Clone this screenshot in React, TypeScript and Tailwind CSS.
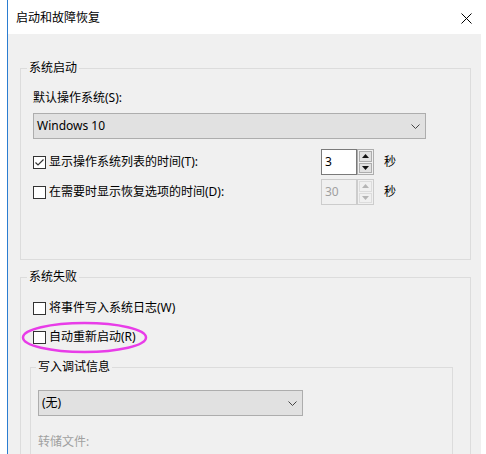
import React from "react";

const font = { fontFamily: '"Noto Sans", "Noto Sans CJK SC", sans-serif' };

function Check({ checked }: { checked?: boolean }) {
  return (
    <div className="w-[13px] h-[13px] border border-[#333333] bg-white flex items-center justify-center shrink-0">
      {checked && (
        <svg width="11" height="11" viewBox="0 0 11 11">
          <polyline points="1.5,5.5 4,8 9.5,2.5" fill="none" stroke="#333" strokeWidth="1.2" />
        </svg>
      )}
    </div>
  );
}

function Chevron() {
  return (
    <svg width="9" height="5" viewBox="0 0 9 5">
      <polyline points="0.5,0.5 4.5,4.5 8.5,0.5" fill="none" stroke="#444" strokeWidth="1" />
    </svg>
  );
}

function Combo({ text, width }: { text: string; width: string }) {
  return (
    <div className={`${width} h-[26px] border border-[#adadad] bg-[#e1e1e1] flex items-center justify-between pl-[3px] pr-[5px]`}>
      <span className="leading-[16px] text-black">{text}</span>
      <Chevron />
    </div>
  );
}

function Arrow({ up, color }: { up?: boolean; color: string }) {
  return (
    <svg width="7" height="4" viewBox="0 0 7 4">
      {up ? <polygon points="0,4 7,4 3.5,0" fill={color} /> : <polygon points="0,0 7,0 3.5,4" fill={color} />}
    </svg>
  );
}

function Spinner({ value, disabled }: { value: string; disabled?: boolean }) {
  const arrow = disabled ? "#b5b5b5" : "#111";
  return (
    <div className="flex h-[26px]">
      <div
        className={`w-[36px] h-[26px] border flex items-center pl-[3px] ${
          disabled ? "border-[#cccccc] bg-[#f0f0f0] text-[#a0a0a0]" : "border-[#7a7a7a] bg-white text-black"
        }`}
      >
        <span className="leading-[16px]">{value}</span>
      </div>
      <div className={`w-[17px] h-[26px] border flex flex-col p-[1px] gap-[1px] ${disabled ? "border-[#cccccc]" : "border-[#adadad]"}`}>
        <div className={`flex-1 border flex items-center justify-center ${disabled ? "border-[#dcdcdc] bg-[#f0f0f0]" : "border-[#adadad] bg-[#e1e1e1]"}`}>
          <Arrow up color={arrow} />
        </div>
        <div className={`flex-1 border flex items-center justify-center ${disabled ? "border-[#dcdcdc] bg-[#f0f0f0]" : "border-[#adadad] bg-[#e1e1e1]"}`}>
          <Arrow color={arrow} />
        </div>
      </div>
    </div>
  );
}

export default function App() {
  return (
    <div className="w-[486px] h-[454px] bg-white flex overflow-hidden relative text-[12px] text-black" style={font}>
      <div className="w-[7px] bg-white shrink-0" />
      <div className="w-px bg-[#2b7dd1] shrink-0" />
      <div className="flex-1 flex flex-col">
        <div className="h-[34px] flex items-center justify-between pl-[8px] pr-[14px] shrink-0">
          <span className="leading-[16px] pt-[2px]">启动和故障恢复</span>
          <svg width="11" height="11" viewBox="0 0 11 11" className="mt-[2px]">
            <line x1="0.5" y1="0.5" x2="10.5" y2="10.5" stroke="#000" strokeWidth="1" />
            <line x1="10.5" y1="0.5" x2="0.5" y2="10.5" stroke="#000" strokeWidth="1" />
          </svg>
        </div>
        <div className="flex-1 flex">
          <div className="w-[473px] bg-[#f0f0f0] flex flex-col">
            <fieldset className="mt-[26px] ml-[12px] w-[451px] border border-[#dcdcdc] p-0 m-0 min-w-0">
              <legend className="ml-[6px] px-[2px] leading-[16px]">系统启动</legend>
              <div className="pl-[12px] pb-[54px] flex flex-col">
                <div className="mt-[14px] leading-[16px]">默认操作系统(S):</div>
                <div className="mt-[7px]">
                  <Combo text="Windows 10" width="w-[393px]" />
                </div>
                <div className="mt-[10px] flex items-center h-[26px]">
                  <div className="w-[288px] flex items-center gap-[3px]">
                    <Check checked />
                    <span className="leading-[16px]">显示操作系统列表的时间(T):</span>
                  </div>
                  <Spinner value="3" />
                  <span className="ml-[10px] leading-[16px]">秒</span>
                </div>
                <div className="mt-[4px] flex items-center h-[26px]">
                  <div className="w-[288px] flex items-center gap-[3px]">
                    <Check />
                    <span className="leading-[16px]">在需要时显示恢复选项的时间(D):</span>
                  </div>
                  <Spinner value="30" disabled />
                  <span className="ml-[10px] leading-[16px]">秒</span>
                </div>
              </div>
            </fieldset>

            <fieldset className="mt-[9px] ml-[12px] w-[451px] border border-[#dcdcdc] p-0 m-0 min-w-0">
              <legend className="ml-[6px] px-[2px] leading-[16px]">系统失败</legend>
              <div className="pl-[9px] pb-[40px] flex flex-col">
                <div className="mt-[13px] h-[20px] pl-[3px] flex items-center gap-[3px]">
                  <Check />
                  <span className="leading-[16px]">将事件写入系统日志(W)</span>
                </div>
                <div className="mt-[9px] h-[20px] pl-[3px] flex items-center gap-[3px]">
                  <Check />
                  <span className="leading-[16px]">自动重新启动(R)</span>
                </div>
                <fieldset className="mt-[12px] w-[423px] border border-[#dcdcdc] p-0 m-0 min-w-0">
                  <legend className="ml-[5px] px-[2px] leading-[16px]">写入调试信息</legend>
                  <div className="pl-[7px] pb-[30px] flex flex-col">
                    <div className="mt-[15px]">
                      <Combo text="(无)" width="w-[265px]" />
                    </div>
                    <div className="mt-[18px] leading-[16px] text-[#a0a0a0]">转储文件:</div>
                  </div>
                </fieldset>
              </div>
            </fieldset>
          </div>
          <div className="flex-1 bg-white flex flex-col justify-end items-center pb-[5px]">
            <svg width="5" height="5" viewBox="0 0 5 5">
              <line x1="2.5" y1="0" x2="2.5" y2="5" stroke="#777" strokeWidth="1" />
              <line x1="0" y1="2.5" x2="5" y2="2.5" stroke="#777" strokeWidth="1" />
            </svg>
          </div>
        </div>
      </div>
      <svg className="absolute left-[21px] top-[321px]" width="127" height="33" viewBox="0 0 127 33">
        <ellipse cx="63.5" cy="16.5" rx="61.5" ry="14.5" fill="none" stroke="#e83ce8" strokeWidth="2.5" />
      </svg>
    </div>
  );
}
